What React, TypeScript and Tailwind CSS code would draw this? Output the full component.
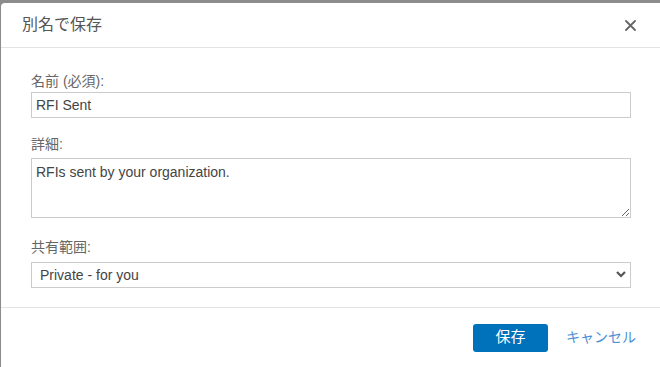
import { useState } from 'react';

const font = { fontFamily: '"Liberation Sans", "Noto Sans CJK JP", sans-serif' };

export default function App() {
  const [name, setName] = useState('RFI Sent');
  const [detail, setDetail] = useState('RFIs sent by your organization.');
  const [scope, setScope] = useState('private');

  return (
    <div className="w-[660px] h-[367px] bg-[#8c8c8c] pt-[3px] pl-[1px] overflow-hidden" style={font}>
      <div className="h-full bg-white rounded-tl-[4px] flex flex-col">
        {/* header */}
        <div className="h-[45px] shrink-0 border-b border-[#e3e3e3] flex items-center justify-between pl-[21px] pr-[23px]">
          <h2 className="text-[16px] text-[#555] font-normal">別名で保存</h2>
          <button className="w-[14px] h-[14px] flex items-center justify-center text-[#666]">
            <svg width="11" height="11" viewBox="0 0 11 11">
              <path d="M1 1 L10 10 M10 1 L1 10" stroke="currentColor" strokeWidth="1.8" strokeLinecap="round" />
            </svg>
          </button>
        </div>

        {/* body */}
        <div className="flex-1 pl-[30px] pr-[29px] pt-[23px]">
          <label className="block text-[14px] leading-[20px] text-[#666] mb-[1px]">名前 (必須):</label>
          <input
            value={name}
            onChange={(e) => setName(e.target.value)}
            className="block w-full h-[26px] border border-[#ccc] px-[4px] text-[14px] text-[#444] outline-none"
          />

          <label className="block text-[14px] leading-[20px] text-[#666] mt-[16px] mb-[4px]">詳細:</label>
          <textarea
            value={detail}
            onChange={(e) => setDetail(e.target.value)}
            className="block w-full h-[60px] border border-[#ccc] px-[4px] pt-[4px] text-[14px] leading-[18px] text-[#444] outline-none"
          />

          <label className="block text-[14px] leading-[20px] text-[#666] mt-[19px] mb-[5px]">共有範囲:</label>
          <div className="relative">
            <select
              value={scope}
              onChange={(e) => setScope(e.target.value)}
              className="block w-full h-[26px] border border-[#ccc] pl-[8px] text-[14px] text-[#444] bg-white appearance-none outline-none"
            >
              <option value="private">Private - for you</option>
              <option value="org">Organization</option>
            </select>
            <svg className="absolute right-[4px] top-[8px] pointer-events-none" width="12" height="9" viewBox="0 0 12 9">
              <path d="M2 2 L6 6 L10 2" stroke="#555" strokeWidth="2.2" fill="none" />
            </svg>
          </div>
        </div>

        {/* footer */}
        <div className="h-[60px] shrink-0 border-t border-[#e3e3e3] flex items-center justify-end pr-[24px]">
          <button className="w-[75px] h-[28px] rounded-[3px] bg-[#0071bb] text-white text-[15px] mr-[18px]">保存</button>
          <button className="whitespace-nowrap text-[14px] text-[#4a8fd4]">キャンセル</button>
        </div>
      </div>
    </div>
  );
}
